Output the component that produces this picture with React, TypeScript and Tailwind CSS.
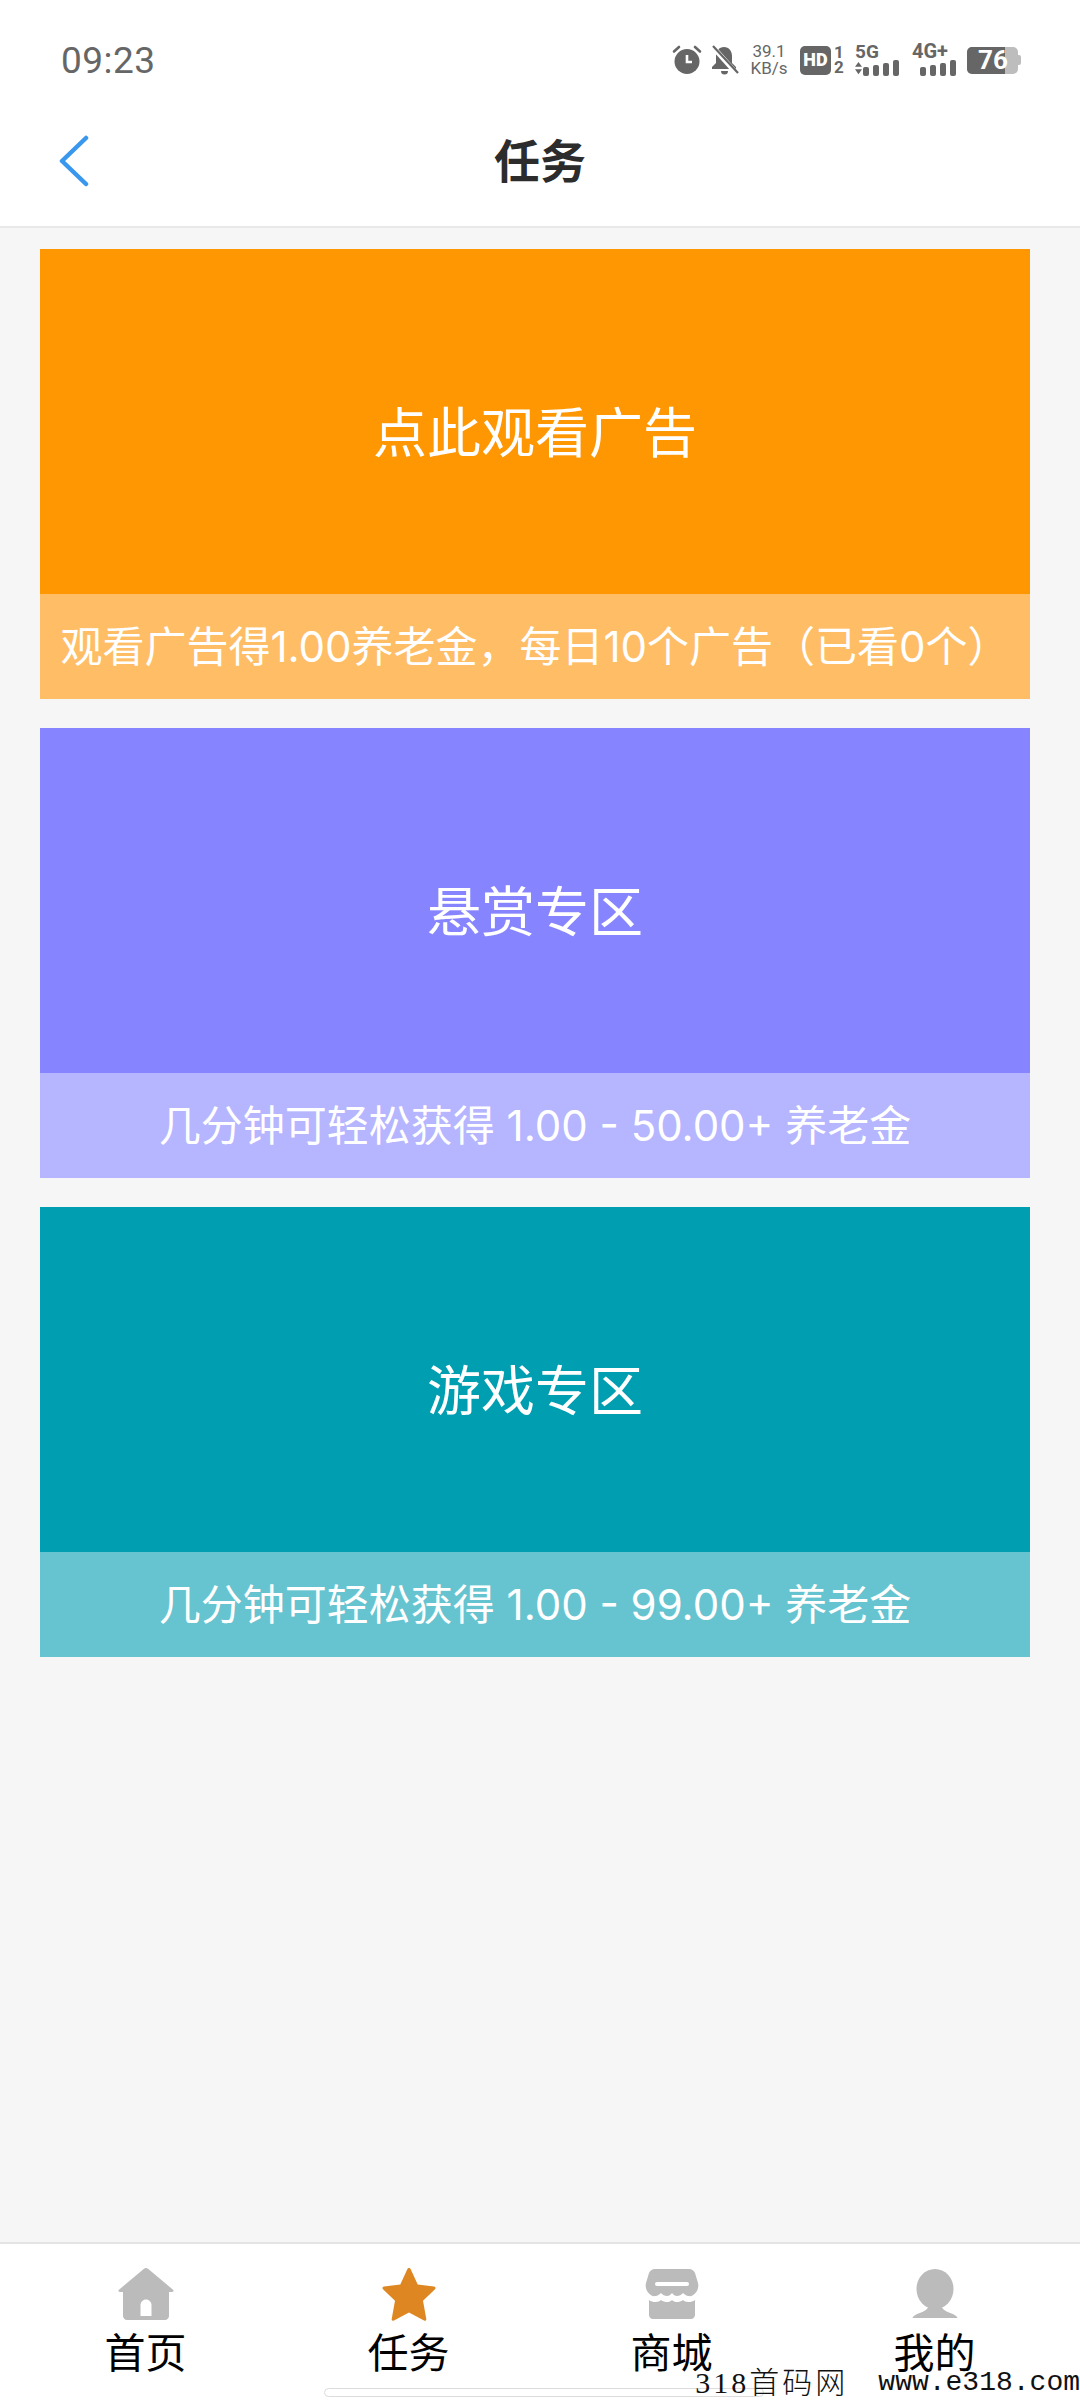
import React from "react";

const TASKS = [
  { title: "点此观看广告", desc: "观看广告得1.00养老金，每日10个广告（已看0个）", hero: "bg-[#ff9702]", foot: "bg-[#ffbd66]" },
  { title: "悬赏专区", desc: "几分钟可轻松获得 1.00 - 50.00+ 养老金", hero: "bg-[#8685ff]", foot: "bg-[#b6b5ff]" },
  { title: "游戏专区", desc: "几分钟可轻松获得 1.00 - 99.00+ 养老金", hero: "bg-[#009eb1]", foot: "bg-[#66c4d0]" },
];

const Bars = () => (
  <div className="flex items-end gap-[4px]">
    <div className="w-[6px] h-[9px] rounded-[2px] bg-[#666]" />
    <div className="w-[6px] h-[11px] rounded-[2px] bg-[#666]" />
    <div className="w-[6px] h-[13px] rounded-[2px] bg-[#666]" />
    <div className="w-[6px] h-[16px] rounded-[2px] bg-[#666]" />
  </div>
);

const StatusBar = () => (
  <div className="h-[90px] flex items-center justify-between pl-[61px] pr-[59px] pt-[30px] text-[#666]">
    <span className="text-[37px] leading-none font-['Roboto',sans-serif] tracking-[0.5px]">09:23</span>
    <div className="flex items-center">
      {/* alarm */}
      <svg width="30" height="30" viewBox="0 0 30 30" className="mr-[8px] shrink-0">
        <circle cx="15" cy="16.5" r="12.5" fill="#666" />
        <path d="M15 10v7h5" fill="none" stroke="#fff" strokeWidth="2.6" />
        <path d="M2 6.5 7 2M28 6.5 23 2" fill="none" stroke="#666" strokeWidth="2.6" strokeLinecap="round" />
      </svg>
      {/* muted bell */}
      <svg width="29" height="30" viewBox="0 0 29 30" className="mr-[12px] shrink-0">
        <path d="M14 2c-5 0-8 4-8 9v7l-4 4v2h24v-2l-4-4v-7c0-5-3-9-8-9z" fill="#666" />
        <path d="M11 26h7a3.5 3.5 0 0 1-7 0z" fill="#666" />
        <path d="M2 1 27 29" stroke="#fff" strokeWidth="5" />
        <path d="M3 1 28 28" stroke="#666" strokeWidth="2.2" />
      </svg>
      <div className="w-[36px] mr-[13px] shrink-0 flex flex-col items-center font-['Roboto',sans-serif] text-[17px] leading-[17px]">
        <span>39.1</span>
        <span>KB/s</span>
      </div>
      <div className="w-[31px] h-[29px] shrink-0 rounded-[5px] bg-[#666] text-white flex items-center justify-center font-['Roboto',sans-serif] font-black text-[18px] leading-none">
        HD
      </div>
      <div className="w-[10px] ml-[3px] mr-[11px] shrink-0 flex flex-col items-center font-['Roboto',sans-serif] font-bold text-[17px] leading-[15px]">
        <span>1</span>
        <span>2</span>
      </div>
      <div className="flex flex-col mr-[13px] w-[44px] shrink-0">
        <span className="font-['Roboto',sans-serif] font-bold text-[19px] leading-[15px]">5G</span>
        <div className="flex items-center gap-[1px] mt-[1px]">
          <svg width="8" height="14" viewBox="0 0 8 14">
            <path d="M4 0 8 5.5H0zM0 8.5h8L4 14z" fill="#666" />
          </svg>
          <Bars />
        </div>
      </div>
      <div className="flex flex-col mr-[11px] w-[44px] shrink-0">
        <span className="font-['Roboto',sans-serif] font-bold text-[20px] leading-[15px] whitespace-nowrap">4G+</span>
        <div className="flex justify-end mt-[1px]">
          <Bars />
        </div>
      </div>
      <div className="flex items-center shrink-0">
        <div className="relative w-[51px] h-[27px] rounded-[5px] overflow-hidden bg-[#bdbdbd] flex">
          <div className="w-[38px] bg-[#666]" />
          <span className="absolute inset-0 pl-[11px] flex items-center text-white font-['Roboto',sans-serif] font-bold text-[26px] leading-none">76</span>
        </div>
        <div className="w-[3px] h-[10px] rounded-r-[2px] bg-[#bdbdbd]" />
      </div>
    </div>
  </div>
);

const HomeIcon = () => (
  <svg width="56" height="52" viewBox="0 0 56 52">
    <path
      d="M28 0c.8 0 1.500.3 2 .7l25 21c1.200 1 .5 2.300-1 2.300h-3v24c0 2.200-1.800 4-4 4H9c-2.200 0-4-1.800-4-4V24H2c-1.500 0-2.200-1.300-1-2.300l25-21c.5-.4 1.200-.7 2-.7z"
      fill="#bbb"
    />
    <path d="M22.500 48V37c0-3 2.500-5.500 5.500-5.500s5.500 2.500 5.500 5.500v11z" fill="#fff" />
  </svg>
);

const StarIcon = () => (
  <svg width="54" height="54" viewBox="0 0 54 54">
    <path
      d="M27 1c.8 0 1.300.5 1.700 1.300l7 15.200 16.300 2c1.500.2 2 1.700 1 2.800L41 33.800 44.300 52c.2 1.500-1 2.300-2.300 1.600L27 45.500l-15 8.100c-1.300.7-2.500-.1-2.300-1.600L13 33.800 1 22.300c-1-1.100-.5-2.600 1-2.800l16.300-2 7-15.200C25.700 1.500 26.200 1 27 1z"
      fill="#de8722"
    />
  </svg>
);

const StoreIcon = () => (
  <svg width="54" height="50" viewBox="0 0 54 50">
    <path
      d="M10 0h34c3 0 5 2 6 4l3 10c1 4-.5 8-3 10.500-2 2-4 3-6.500 2.500-2 0-4-2-5.500-3-1.500 2-4 3-6 3s-3.500-1-5-3c-1.500 2-3 3-5 3s-4.500-1-6-3c-1.500 1-3.500 3-5.500 3-2.500.500-4.500-.5-6.500-2.500C1.500 22 0 18 1 14L4 4c1-2 3-4 6-4z"
      fill="#bbb"
    />
    <rect x="10" y="13" width="34" height="4" rx="2" fill="#fff" />
    <path
      d="M4 31c2 1.500 4 2 6.500 2 2.500 0 4.500-1 5.500-2 2 1.500 4 2 6 2s3.500-.5 5-2c1.500 1.500 3 2 5 2s4-.5 6-2c1 1 3 2 5.500 2 2.500 0 4.500-.5 6.500-2v15c0 2.200-1.800 4-4 4H8c-2.200 0-4-1.800-4-4z"
      fill="#bbb"
    />
  </svg>
);

const UserIcon = () => (
  <svg width="46" height="50" viewBox="0 0 46 50">
    <ellipse cx="23" cy="20" rx="18.500" ry="20" fill="#bbb" />
    <path d="M17 36h12c1 4 4 6 8 7.500 3 1 8 3 8.500 5.500H.5c.5-2.500 5.500-4.500 8.500-5.500 4-1.500 7-3.500 8-7.500z" fill="#bbb" />
  </svg>
);

const NAV = [
  { label: "首页", icon: <HomeIcon /> },
  { label: "任务", icon: <StarIcon /> },
  { label: "商城", icon: <StoreIcon /> },
  { label: "我的", icon: <UserIcon /> },
];

export default function App() {
  return (
    <div className="relative h-[2400px] w-[1080px] overflow-hidden flex flex-col bg-[#f6f6f6] font-['Inter','Noto_Sans_CJK_SC',sans-serif]">
      {/* Top bars */}
      <div className="bg-white border-b-2 border-[#e8e8e8]">
        <StatusBar />
        <div className="h-[136px] flex items-center pt-[5px] relative">
          <svg width="32" height="52" viewBox="0 0 32 52" className="ml-[58px]">
            <path d="M28 3 4 26l24 23" fill="none" stroke="#3a97ee" strokeWidth="4.500" strokeLinecap="round" strokeLinejoin="round" />
          </svg>
          <span className="absolute left-0 right-0 text-center text-[46px] leading-none font-bold text-[#2c2c2c]">任务</span>
        </div>
      </div>

      {/* Task cards */}
      <div className="flex-1 pl-[40px] pr-[50px] pt-[21px] flex flex-col gap-[29px]">
        {TASKS.map((task) => (
          <div key={task.title} className="flex flex-col">
            <div className={`h-[345px] pt-[24px] flex items-center justify-center text-white text-[54px] ${task.hero}`}>
              {task.title}
            </div>
            <div className={`h-[105px] flex items-center justify-center text-white text-[42px] whitespace-nowrap ${task.foot}`}>
              {task.desc}
            </div>
          </div>
        ))}
      </div>

      {/* Bottom nav */}
      <div className="h-[158px] bg-white border-t-2 border-[#e4e4e4] px-[14px] grid grid-cols-4">
        {NAV.map((item) => (
          <div key={item.label} className="flex flex-col items-center pt-[23px]">
            <div className="h-[54px] flex items-center justify-center">{item.icon}</div>
            <span className="mt-[7px] text-[41px] leading-[50px] text-black">{item.label}</span>
          </div>
        ))}
      </div>

      {/* Home indicator */}
      <div className="absolute left-[324px] bottom-[3px] w-[440px] h-[9px] rounded-full bg-white border border-[#dcdcdc]" />

      {/* Watermark */}
      <div className="absolute right-0 bottom-0 flex items-center text-[#111] leading-none">
        <span className="font-['Liberation_Serif','Noto_Sans_CJK_SC',serif] text-[30px] leading-[34px] tracking-[3px] font-light">318首码网</span>
        <span className="ml-[30px] font-['Liberation_Mono',monospace] text-[28px] leading-[34px]">www.e318.com</span>
      </div>
    </div>
  );
}
